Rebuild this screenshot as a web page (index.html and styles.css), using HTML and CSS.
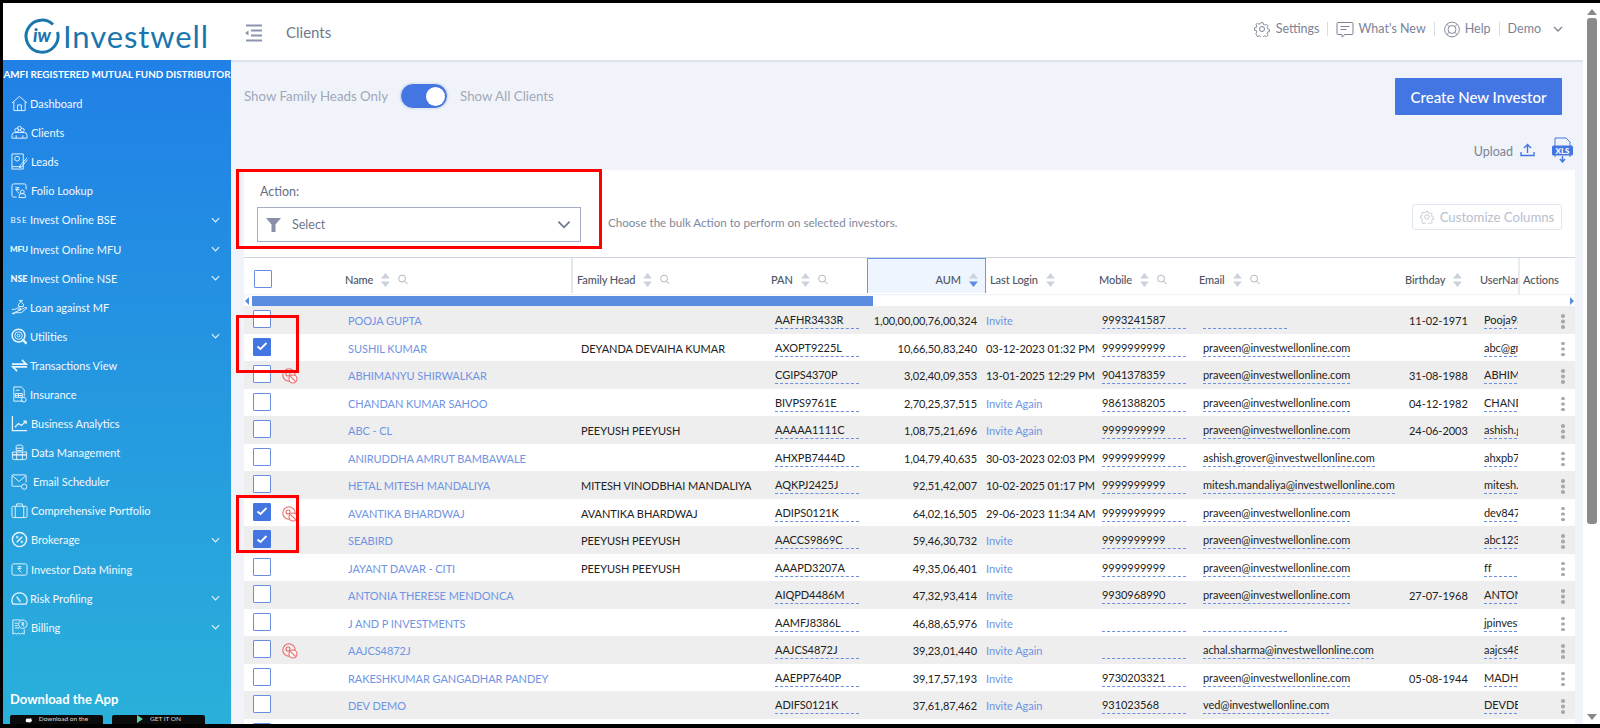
FILE: index.html
```html
<!DOCTYPE html>
<html lang="en">
<head>
<meta charset="utf-8">
<title>Investwell - Clients</title>
<link rel="stylesheet" href="styles.css">
</head>
<body>
<svg class="defs" aria-hidden="true">
  <symbol id="sort" viewBox="0 0 9 14"><path d="M4.5 0 9 5.5H0z" fill="#ccd2dd"/><path d="M4.5 14 0 8.500H9z" fill="#ccd2dd"/></symbol>
  <symbol id="sortd" viewBox="0 0 9 14"><path d="M4.5 0 9 5.5H0z" fill="#ccd2dd"/><path d="M4.500 14 0 8.500H9z" fill="#5e8be3"/></symbol>
  <symbol id="find" viewBox="0 0 11 11"><circle cx="4.500" cy="4.500" r="3.800" fill="none" stroke="#a9b0bd" stroke-width="1"/><path d="M7.300 7.300 10.500 10.500" stroke="#a9b0bd" stroke-width="1.100"/></symbol>
  <symbol id="tick" viewBox="0 0 18 18"><path d="M4.500 9.500 7.500 12 13.500 6" fill="none" stroke="#fff" stroke-width="1.800"/></symbol>
  <symbol id="noinv" viewBox="0 0 16 16"><circle cx="7" cy="7" r="6.200" fill="none" stroke="#ea6a6c" stroke-width="1.100"/><circle cx="6" cy="6" r="2" fill="none" stroke="#ea6a6c" stroke-width="1.100"/><circle cx="11" cy="11" r="4" fill="#fff" stroke="#ea6a6c" stroke-width="1.100"/><path d="M8.300 8.300 13.700 13.700" stroke="#ea6a6c" stroke-width="1.200"/></symbol>
  <symbol id="chev" viewBox="0 0 10 6"><path d="M1 1 5 5 9 1" fill="none" stroke="currentColor" stroke-width="1.300"/></symbol>
  <symbol id="gear" viewBox="0 0 16 16"><circle cx="8" cy="8" r="2.500" fill="none" stroke="currentColor"/><path d="M6.700 1h2.600l.4 2 1.600.7 1.800-1 1.700 1.900-1.100 1.700.6 1.600 2 .4v2.600l-2 .4-.6 1.600 1.100 1.700-1.700 1.900-1.800-1-1.600.7-.4 2H6.700l-.4-2-1.600-.7-1.800 1L1.200 13l1.100-1.700-.6-1.600-2-.4V6.700l2-.4.6-1.600L1.200 3 2.900 1.700l1.800 1 1.600-.7z" transform="translate(.8 .8) scale(.9)" fill="none" stroke="currentColor"/></symbol>
</svg>
<div class="shell">
  <div class="app">
    <header class="topbar">
      <div class="brand">
        <svg class="brand-mark" viewBox="0 0 36 36"><path d="M29 6.500A16 16 0 1 0 33.500 14" fill="none" stroke="#1a76ac" stroke-width="3"/><text x="18" y="24" text-anchor="middle" class="brand-iw">iw</text></svg>
        <span class="brand-name">Investwell</span>
      </div>
      <svg class="menu-ic" viewBox="0 0 18 18"><path d="M2 1.500H18M7 6.500H18M7 11.500H18M2 16.500H18" stroke="#8b94ad" stroke-width="2.200"/><path d="M4.500 6.500 1 9 4.500 11.500z" fill="#8b94ad"/></svg>
      <span class="page-title">Clients</span>
      <nav class="top-nav">
        <svg class="nav-ic"><use href="#gear"/></svg><span class="nav-txt">Settings</span><i class="nav-sep"></i>
        <svg class="nav-ic nav-ic-w" viewBox="0 0 18 16"><path d="M2 1h14a1 1 0 0 1 1 1v10a1 1 0 0 1-1 1H9l-3 2.500V13H2a1 1 0 0 1-1-1V2a1 1 0 0 1 1-1z" fill="none" stroke="currentColor"/><path d="M4.500 5h9M4.500 8h6" stroke="currentColor"/></svg><span class="nav-txt">What's New</span><i class="nav-sep"></i>
        <svg class="nav-ic nav-ic-w" viewBox="0 0 18 18"><circle cx="9" cy="9" r="7.800" fill="none" stroke="currentColor"/><circle cx="9" cy="9" r="4.200" fill="none" stroke="currentColor"/><path d="M3.500 3.500 6 6M14.500 3.500 12 6M3.500 14.500 6 12M14.500 14.500 12 12" stroke="currentColor"/></svg><span class="nav-txt">Help</span><i class="nav-sep"></i>
        <span class="nav-txt">Demo</span>
        <svg class="nav-chev"><use href="#chev"/></svg>
      </nav>
    </header>
    <div class="body-wrap">
      <aside class="sidebar">
        <div class="amfi">AMFI REGISTERED MUTUAL FUND DISTRIBUTOR</div>
        <ul class="side-list">
          <li class="side-item"><span class="slot"><svg viewBox="0 0 18 18"><path d="M1 8.500 9 1.500 17 8.500M3 7v9.500h12V7M7 16.500V10.500h4v6" /></svg></span><span class="lbl">Dashboard</span></li>
          <li class="side-item"><span class="slot"><svg viewBox="0 0 18 18"><circle cx="6" cy="6.500" r="2"/><circle cx="12" cy="6.500" r="2"/><circle cx="9" cy="4.500" r="2"/><path d="M1 15v-3a3 3 0 0 1 3-3h10a3 3 0 0 1 3 3v3zM5.500 15v-3M12.500 15v-3"/></svg></span><span class="lbl lbl1">Clients</span></li>
          <li class="side-item"><span class="slot"><svg viewBox="0 0 18 18"><path d="M1 1h12v16H1zM1 14.500h10"/><circle cx="6.500" cy="6" r="2.500"/><path d="M17 5 10 13l-1 2.500 2.500-1L17.500 7"/></svg></span><span class="lbl lbl1">Leads</span></li>
          <li class="side-item"><span class="slot"><svg viewBox="0 0 18 18"><path d="M6 16H3a2 2 0 0 1-2-2V4a2 2 0 0 1 2-2h11a2 2 0 0 1 2 2v4M4.500 6H9M4.500 8H9M6 6q2 1 0 3.500L9 12.500"/><circle cx="12" cy="10.500" r="2"/><path d="M8.500 16.500v-1a3 3 0 0 1 7 0v1z"/></svg></span><span class="lbl lbl1">Folio Lookup</span></li>
          <li class="side-item"><span class="slot slot-t slot-thin">BSE</span><span class="lbl">Invest Online BSE</span><svg class="side-chev"><use href="#chev"/></svg></li>
          <li class="side-item"><span class="slot slot-t">MFU</span><span class="lbl">Invest Online MFU</span><svg class="side-chev"><use href="#chev"/></svg></li>
          <li class="side-item"><span class="slot slot-t slot-big">NSE</span><span class="lbl">Invest Online NSE</span><svg class="side-chev"><use href="#chev"/></svg></li>
          <li class="side-item"><span class="slot"><svg viewBox="0 0 18 18"><path d="M1 11h3l3-1.500h3v2H7M10 11.500l5-2.500 2 .5-6 5H5l-1 1H1z"/><path d="M9 1.500h3L11 3.500q3.500 2 2 4.500H8q-1.500-2.500 2-4.500z"/></svg></span><span class="lbl">Loan against MF</span></li>
          <li class="side-item"><span class="slot"><svg viewBox="0 0 18 18"><circle cx="8" cy="8" r="6.800" stroke-width="1.600"/><circle cx="8" cy="8" r="4"/><circle cx="8" cy="8" r="1.500"/><path d="M12 12 16.500 16.500" stroke-width="2.400"/></svg></span><span class="lbl">Utilities</span><svg class="side-chev"><use href="#chev"/></svg></li>
          <li class="side-item"><span class="slot"><svg viewBox="0 0 18 18"><path d="M1 7.500H16L11.500 3M17 10.500H2L6.500 15" stroke-width="1.700"/></svg></span><span class="lbl">Transactions View</span></li>
          <li class="side-item"><span class="slot"><svg viewBox="0 0 18 18"><path d="M13 16H3V1h8l3 3v7M5 4.500h4M4.500 8H12v4H4.500zM8 8v4M4.500 10h7.500"/><circle cx="13.500" cy="14.500" r="2.500"/></svg></span><span class="lbl">Insurance</span></li>
          <li class="side-item"><span class="slot"><svg viewBox="0 0 18 18"><path d="M1.500 1v15.500H17" stroke-width="1.300"/><path d="M4 13l4-4 3 2 5-4.500M13 6.500h3v3" stroke-width="1.300"/></svg></span><span class="lbl lbl1">Business Analytics</span></li>
          <li class="side-item"><span class="slot"><svg viewBox="0 0 18 18"><path d="M5.500 2.500a3.500 1.500 0 0 1 7 0v4.500h-7zM5.500 4.500h7"/><path d="M1.500 8.500h15v3h-15zM1.500 11.500h15v3a2 2 0 0 1-2 2h-11a2 2 0 0 1-2-2zM6 8.500v8M12 8.500v8"/></svg></span><span class="lbl lbl1">Data Management</span></li>
          <li class="side-item"><span class="slot"><svg viewBox="0 0 18 18"><path d="M11 14H2a1 1 0 0 1-1-1V3a1 1 0 0 1 1-1h13a1 1 0 0 1 1 1v7M1.500 3 8.500 9 15.500 3"/><circle cx="14" cy="14.500" r="2.800"/></svg></span><span class="lbl lbl3">Email Scheduler</span></li>
          <li class="side-item"><span class="slot"><svg viewBox="0 0 18 18"><path d="M2.500 4.500h13a1.500 1.500 0 0 1 1.500 1.500v9a1.500 1.500 0 0 1-1.500 1.500h-13A1.500 1.500 0 0 1 1 15V6a1.500 1.500 0 0 1 1.500-1.500zM6 4.500V2h6v2.500M4.500 4.500v12M13.500 4.500v12"/></svg></span><span class="lbl lbl1">Comprehensive Portfolio</span></li>
          <li class="side-item"><span class="slot"><svg viewBox="0 0 18 18"><circle cx="9" cy="9" r="7.500" stroke-width="1.500"/><path d="M6 12 12 6" stroke-width="1.500"/><circle cx="6.500" cy="6.500" r="1"/><circle cx="11.500" cy="11.500" r="1"/></svg></span><span class="lbl lbl1">Brokerage</span><svg class="side-chev"><use href="#chev"/></svg></li>
          <li class="side-item"><span class="slot"><svg viewBox="0 0 18 18"><rect x="1" y="3" width="16" height="12" rx="2"/><path d="M7 6h4M7 8h4M8 6q2.500 1 0 3l3 3"/></svg></span><span class="lbl lbl1">Investor Data Mining</span></li>
          <li class="side-item"><span class="slot"><svg viewBox="0 0 18 18"><path d="M2 15a8 8 0 1 1 14 0z" stroke-width="1.300"/><path d="M6 7l4 5.500" stroke-width="1.500"/></svg></span><span class="lbl">Risk Profiling</span><svg class="side-chev"><use href="#chev"/></svg></li>
          <li class="side-item"><span class="slot"><svg viewBox="0 0 18 18"><path d="M2 1h8M2 1v15l2-1 2 1 2-1 2 1 2-1 2 1v-5M4 4.500h3M4 7h3M4 9.500h5"/><circle cx="12.500" cy="5.500" r="4.500"/><path d="M11 4h3M11 5.500h3M12 4q2 1 0 2.500l2 1.500"/></svg></span><span class="lbl lbl1">Billing</span><svg class="side-chev"><use href="#chev"/></svg></li>
        </ul>
        <div class="dl-title">Download the App</div>
        <div class="badges">
          <span class="badge"><svg class="badge-ic" viewBox="0 0 8 8"><path d="M1 7q-1-4 2-3.500 2 .5 3-.5l1 3-2 1.500z" fill="#fff"/></svg>Download on the</span>
          <span class="badge"><svg class="badge-ic" viewBox="0 0 8 8"><path d="M1 0 7 4 1 8z" fill="#5fd0a0"/></svg>GET IT ON</span>
        </div>
      </aside>
      <main class="main">
        <div class="toolbar">
          <div class="switch-row">
            <span>Show Family Heads Only</span>
            <span class="switch"><i class="knob"></i></span>
            <span>Show All Clients</span>
          </div>
          <button class="create" type="button">Create New Investor</button>
        </div>
        <div class="upload-row">
          <span class="upload">Upload</span>
          <svg class="up-ic" viewBox="0 0 15 14"><path d="M7.500 10V1.500M4 5l3.500-3.500L11 5" fill="none" stroke="#4476e3" stroke-width="1.400"/><path d="M1 9v3.500h13V9" fill="none" stroke="#4476e3" stroke-width="1.400"/></svg>
          <svg class="xls-ic" viewBox="0 0 21 26"><path d="M3 9V1h11l4 4v4M3 18v2M18 18v2" fill="none" stroke="#4476e3"/><rect x="0" y="8.500" width="21" height="10" rx="1.500" fill="#4476e3"/><text x="10.500" y="16.800" text-anchor="middle" class="xls-t">XLS</text><path d="M10.500 19v5M8 22l2.500 3 2.500-3" fill="none" stroke="#4476e3" stroke-width="1.400"/></svg>
        </div>
        <section class="panel">
          <div class="action-bar">
            <div class="action-col">
              <label class="action-lbl">Action:</label>
              <div class="select">
                <svg class="funnel" viewBox="0 0 15 14"><path d="M0 0H15L9.500 6.500V14H5.500V6.500z" fill="#8790a6"/></svg>
                <span class="sel-txt">Select</span>
                <svg class="sel-chev"><use href="#chev"/></svg>
              </div>
            </div>
            <span class="bulk-note">Choose the bulk Action to perform on selected investors.</span>
            <button class="customize" type="button"><svg class="cust-ic"><use href="#gear"/></svg>Customize Columns</button>
          </div>
          <div class="grid-wrap">
            <div class="row head">
              <div class="hc hc-sel"><span class="cb"></span></div>
              <div class="hc hc-name">Name<svg class="s"><use href="#sort"/></svg><svg class="f"><use href="#find"/></svg></div>
              <div class="hc">Family Head<svg class="s"><use href="#sort"/></svg><svg class="f"><use href="#find"/></svg></div>
              <div class="hc">PAN<svg class="s"><use href="#sort"/></svg><svg class="f"><use href="#find"/></svg></div>
              <div class="hc hc-aum">AUM<svg class="s"><use href="#sortd"/></svg></div>
              <div class="hc">Last Login<svg class="s"><use href="#sort"/></svg></div>
              <div class="hc">Mobile<svg class="s"><use href="#sort"/></svg><svg class="f"><use href="#find"/></svg></div>
              <div class="hc hc-mail">Email<svg class="s"><use href="#sort"/></svg><svg class="f"><use href="#find"/></svg></div>
              <div class="hc">Birthday<svg class="s"><use href="#sort"/></svg></div>
              <div class="hc">UserName</div>
              <div class="hc hc-act">Actions</div>
            </div>
            <div class="hscroll"><i class="hs-l"></i><i class="hs-bar"></i><i class="hs-r"></i></div>
            <div class="rows">
              <div class="row"><div class="c-sel"><span class="cb"></span></div><a class="c-name">POOJA GUPTA</a><div class="c-fam"></div><div class="c-pan"><span class="u">AAFHR3433R</span></div><div class="c-aum">1,00,00,00,76,00,324</div><a class="c-log">Invite</a><div class="c-mob"><span class="u">9993241587</span></div><div class="c-mail"><span class="u um"></span></div><div class="c-dob">11-02-1971</div><div class="c-usr"><span class="u">Pooja93</span></div><div class="c-act"><i class="dots"></i></div></div>
              <div class="row"><div class="c-sel"><span class="cb on"><svg><use href="#tick"/></svg></span></div><a class="c-name">SUSHIL KUMAR</a><div class="c-fam">DEYANDA DEVAIHA KUMAR</div><div class="c-pan"><span class="u">AXOPT9225L</span></div><div class="c-aum">10,66,50,83,240</div><div class="c-log">03-12-2023 01:32 PM</div><div class="c-mob"><span class="u">9999999999</span></div><div class="c-mail"><span class="u um">praveen@investwellonline.com</span></div><div class="c-dob"></div><div class="c-usr"><span class="u">abc@gmail</span></div><div class="c-act"><i class="dots"></i></div></div>
              <div class="row"><div class="c-sel"><span class="cb"></span><svg class="ni"><use href="#noinv"/></svg></div><a class="c-name">ABHIMANYU SHIRWALKAR</a><div class="c-fam"></div><div class="c-pan"><span class="u">CGIPS4370P</span></div><div class="c-aum">3,02,40,09,353</div><div class="c-log">13-01-2025 12:29 PM</div><div class="c-mob"><span class="u">9041378359</span></div><div class="c-mail"><span class="u um">praveen@investwellonline.com</span></div><div class="c-dob">31-08-1988</div><div class="c-usr"><span class="u">ABHIMANYU</span></div><div class="c-act"><i class="dots"></i></div></div>
              <div class="row"><div class="c-sel"><span class="cb"></span></div><a class="c-name">CHANDAN KUMAR SAHOO</a><div class="c-fam"></div><div class="c-pan"><span class="u">BIVPS9761E</span></div><div class="c-aum">2,70,25,37,515</div><a class="c-log">Invite Again</a><div class="c-mob"><span class="u">9861388205</span></div><div class="c-mail"><span class="u um">praveen@investwellonline.com</span></div><div class="c-dob">04-12-1982</div><div class="c-usr"><span class="u">CHANDAN</span></div><div class="c-act"><i class="dots"></i></div></div>
              <div class="row"><div class="c-sel"><span class="cb"></span></div><a class="c-name">ABC - CL</a><div class="c-fam">PEEYUSH PEEYUSH</div><div class="c-pan"><span class="u">AAAAA1111C</span></div><div class="c-aum">1,08,75,21,696</div><a class="c-log">Invite Again</a><div class="c-mob"><span class="u">9999999999</span></div><div class="c-mail"><span class="u um">praveen@investwellonline.com</span></div><div class="c-dob">24-06-2003</div><div class="c-usr"><span class="u">ashish.grover</span></div><div class="c-act"><i class="dots"></i></div></div>
              <div class="row"><div class="c-sel"><span class="cb"></span></div><a class="c-name">ANIRUDDHA AMRUT BAMBAWALE</a><div class="c-fam"></div><div class="c-pan"><span class="u">AHXPB7444D</span></div><div class="c-aum">1,04,79,40,635</div><div class="c-log">30-03-2023 02:03 PM</div><div class="c-mob"><span class="u">9999999999</span></div><div class="c-mail"><span class="u um">ashish.grover@investwellonline.com</span></div><div class="c-dob"></div><div class="c-usr"><span class="u">ahxpb7444d</span></div><div class="c-act"><i class="dots"></i></div></div>
              <div class="row"><div class="c-sel"><span class="cb"></span></div><a class="c-name">HETAL MITESH MANDALIYA</a><div class="c-fam">MITESH VINODBHAI MANDALIYA</div><div class="c-pan"><span class="u">AQKPJ2425J</span></div><div class="c-aum">92,51,42,007</div><div class="c-log">10-02-2025 01:17 PM</div><div class="c-mob"><span class="u">9999999999</span></div><div class="c-mail"><span class="u um">mitesh.mandaliya@investwellonline.com</span></div><div class="c-dob"></div><div class="c-usr"><span class="u">mitesh.mandaliya</span></div><div class="c-act"><i class="dots"></i></div></div>
              <div class="row"><div class="c-sel"><span class="cb on"><svg><use href="#tick"/></svg></span><svg class="ni"><use href="#noinv"/></svg></div><a class="c-name">AVANTIKA BHARDWAJ</a><div class="c-fam">AVANTIKA BHARDWAJ</div><div class="c-pan"><span class="u">ADIPS0121K</span></div><div class="c-aum">64,02,16,505</div><div class="c-log">29-06-2023 11:34 AM</div><div class="c-mob"><span class="u">9999999999</span></div><div class="c-mail"><span class="u um">praveen@investwellonline.com</span></div><div class="c-dob"></div><div class="c-usr"><span class="u">dev8471</span></div><div class="c-act"><i class="dots"></i></div></div>
              <div class="row"><div class="c-sel"><span class="cb on"><svg><use href="#tick"/></svg></span></div><a class="c-name">SEABIRD</a><div class="c-fam">PEEYUSH PEEYUSH</div><div class="c-pan"><span class="u">AACCS9869C</span></div><div class="c-aum">59,46,30,732</div><a class="c-log">Invite</a><div class="c-mob"><span class="u">9999999999</span></div><div class="c-mail"><span class="u um">praveen@investwellonline.com</span></div><div class="c-dob"></div><div class="c-usr"><span class="u">abc1234</span></div><div class="c-act"><i class="dots"></i></div></div>
              <div class="row"><div class="c-sel"><span class="cb"></span></div><a class="c-name">JAYANT DAVAR - CITI</a><div class="c-fam">PEEYUSH PEEYUSH</div><div class="c-pan"><span class="u">AAAPD3207A</span></div><div class="c-aum">49,35,06,401</div><a class="c-log">Invite</a><div class="c-mob"><span class="u">9999999999</span></div><div class="c-mail"><span class="u um">praveen@investwellonline.com</span></div><div class="c-dob"></div><div class="c-usr"><span class="u">ff</span></div><div class="c-act"><i class="dots"></i></div></div>
              <div class="row"><div class="c-sel"><span class="cb"></span></div><a class="c-name">ANTONIA THERESE MENDONCA</a><div class="c-fam"></div><div class="c-pan"><span class="u">AIQPD4486M</span></div><div class="c-aum">47,32,93,414</div><a class="c-log">Invite</a><div class="c-mob"><span class="u">9930968990</span></div><div class="c-mail"><span class="u um">praveen@investwellonline.com</span></div><div class="c-dob">27-07-1968</div><div class="c-usr"><span class="u">ANTONIA</span></div><div class="c-act"><i class="dots"></i></div></div>
              <div class="row"><div class="c-sel"><span class="cb"></span></div><a class="c-name">J AND P INVESTMENTS</a><div class="c-fam"></div><div class="c-pan"><span class="u">AAMFJ8386L</span></div><div class="c-aum">46,88,65,976</div><a class="c-log">Invite</a><div class="c-mob"><span class="u"></span></div><div class="c-mail"><span class="u um"></span></div><div class="c-dob"></div><div class="c-usr"><span class="u">jpinvest</span></div><div class="c-act"><i class="dots"></i></div></div>
              <div class="row"><div class="c-sel"><span class="cb"></span><svg class="ni"><use href="#noinv"/></svg></div><a class="c-name">AAJCS4872J</a><div class="c-fam"></div><div class="c-pan"><span class="u">AAJCS4872J</span></div><div class="c-aum">39,23,01,440</div><a class="c-log">Invite Again</a><div class="c-mob"><span class="u"></span></div><div class="c-mail"><span class="u um">achal.sharma@investwellonline.com</span></div><div class="c-dob"></div><div class="c-usr"><span class="u">aajcs4872j</span></div><div class="c-act"><i class="dots"></i></div></div>
              <div class="row"><div class="c-sel"><span class="cb"></span></div><a class="c-name">RAKESHKUMAR GANGADHAR PANDEY</a><div class="c-fam"></div><div class="c-pan"><span class="u">AAEPP7640P</span></div><div class="c-aum">39,17,57,193</div><a class="c-log">Invite</a><div class="c-mob"><span class="u">9730203321</span></div><div class="c-mail"><span class="u um">praveen@investwellonline.com</span></div><div class="c-dob">05-08-1944</div><div class="c-usr"><span class="u">MADHU</span></div><div class="c-act"><i class="dots"></i></div></div>
              <div class="row"><div class="c-sel"><span class="cb"></span></div><a class="c-name">DEV DEMO</a><div class="c-fam"></div><div class="c-pan"><span class="u">ADIFS0121K</span></div><div class="c-aum">37,61,87,462</div><a class="c-log">Invite Again</a><div class="c-mob"><span class="u">931023568</span></div><div class="c-mail"><span class="u um">ved@investwellonline.com</span></div><div class="c-dob"></div><div class="c-usr"><span class="u">DEVDEMO</span></div><div class="c-act"><i class="dots"></i></div></div>
              <div class="row"><div class="c-sel"><span class="cb"></span></div></div>
            </div>
          </div>
        </section>
      </main>
    </div>
  </div>
  <div class="page-scroll"><i class="ps-up"></i><i class="ps-thumb"></i><i class="ps-down"></i></div>
  <i class="callout callout-a"></i>
  <i class="callout callout-b"></i>
  <i class="callout callout-c"></i>
</div>
</body>
</html>
```

FILE: styles.css
```css
* { box-sizing: border-box; }
html, body { margin: 0; height: 728px; overflow: hidden; }
body { background: #000; padding: 3px 0 4px 3px; font-family: Lato, "Open Sans", sans-serif; color: #222; }
.defs { width: 0; height: 0; position: absolute; }
i { display: block; font-style: normal; }

.shell { display: flex; height: 721px; width: 1597px; }
.app { width: 1580px; display: flex; flex-direction: column; }

/* top bar */
.topbar { height: 57px; background: #fff; display: flex; align-items: center; flex: none; }
.brand { width: 241px; display: flex; align-items: center; padding: 8px 0 0 21px; flex: none; }
.brand-mark { width: 36px; height: 36px; flex: none; }
.brand-iw { font: italic 900 18px Lato, sans-serif; fill: #1a76ac; }
.brand-name { font: 400 31px/36px Lato, sans-serif; color: #1a76ac; margin-left: 3px; letter-spacing: .9px; }
.menu-ic { width: 18px; height: 18px; flex: none; margin-top: 2px; }
.page-title { font-size: 15px; color: #6f788d; margin-left: 24px; }
.top-nav { margin-left: auto; display: flex; align-items: center; color: #7b8396; padding: 0 20px 5px 0; font-size: 12.500px; height: 25px; }
.nav-ic { width: 16px; height: 16px; margin-right: 6px; flex: none; }
.nav-ic-w { width: 18px; height: 17px; margin-right: 4px; }
.nav-txt { line-height: 20px; white-space: nowrap; }
.nav-sep { width: 1px; height: 14px; background: #d8dce5; margin: 0 8px; }
.nav-chev { width: 10px; height: 6px; margin-left: 12px; }

/* layout */
.body-wrap { flex: 1; display: flex; min-height: 0; }
.sidebar { width: 228px; flex: none; background: linear-gradient(180deg, #2080e6 0%, #2ab0da 100%); color: #f2f9ff; overflow: hidden; display: flex; flex-direction: column; }
.amfi { font-size: 9.900px; font-weight: 700; white-space: nowrap; text-align: center; height: 30px; line-height: 29px; color: #fff; }
.side-list { list-style: none; margin: 0; padding: 0; }
.side-item { height: 29.100px; display: flex; align-items: center; font-size: 11px; padding-left: 5px; }
.slot { width: 22px; height: 18px; display: flex; align-items: center; justify-content: center; flex: none; }
.slot svg { width: 17px; height: 17px; fill: none; stroke: #e9f5ff; stroke-width: 1; }
.slot-t { font-size: 8px; font-weight: 900; color: #f2f9ff; }
.slot-thin { font-weight: 400; letter-spacing: 1px; }
.slot-big { font-size: 9px; }
.lbl { white-space: nowrap; }
.lbl1 { margin-left: 1px; }
.lbl3 { margin-left: 3px; }
.side-chev { width: 9px; height: 6px; margin-left: auto; margin-right: 11px; color: #dff3ff; flex: none; }
.dl-title { font-size: 13px; font-weight: 700; color: #fff; padding-left: 7px; margin-top: 49px; line-height: 16px; }
.badges { display: flex; gap: 9px; padding-left: 7px; margin-top: 8px; }
.badge { width: 93px; height: 20px; background: #0b0b0b; color: #ddd; font-size: 6.500px; line-height: 8px; display: flex; justify-content: center; gap: 6px; border-radius: 2px; }
.badge-ic { width: 8px; height: 8px; }

/* main */
.main { flex: 1; min-width: 0; background: #f0f3f9; border-top: 2px solid #dde3ee; padding: 16px 8px 0 13px; display: flex; flex-direction: column; }
.toolbar { display: flex; justify-content: space-between; align-items: center; height: 37px; padding-right: 13px; flex: none; }
.switch-row { display: flex; align-items: center; color: #a0a8b9; font-size: 13.300px; gap: 12px; margin-bottom: 1px; }
.switch { width: 48px; height: 26px; border-radius: 13px; background: #4476e3; border: 1px solid #e3e7f0; padding: 3px 3px 0 25px; box-shadow: 0 0 2px #cdd4e2; }
.knob { width: 19px; height: 19px; border-radius: 50%; background: #fff; }
.create { width: 167px; height: 37px; border: 0; background: #4476e3; color: #fff; font: 500 15px Lato, sans-serif; border-radius: 1px; padding: 0; }
.upload-row { height: 25px; margin-top: 22px; display: flex; align-items: center; justify-content: flex-end; padding-right: 2px; flex: none; color: #7b8396; font-size: 12.500px; }
.upload { padding-top: 3px; }
.up-ic { width: 15px; height: 14px; margin-left: 7px; }
.xls-ic { width: 21px; height: 26px; margin-left: 17px; }
.xls-t { font: 900 8px Lato, sans-serif; fill: #fff; }

.panel { flex: 1; min-height: 0; background: #fff; margin-top: 8px; overflow: hidden; display: flex; flex-direction: column; }
.action-bar { height: 87px; flex: none; display: flex; align-items: flex-start; padding: 14px 13px 0 13px; }
.action-col { width: 324px; flex: none; }
.action-lbl { display: block; font-size: 12.500px; line-height: 15px; color: #666e80; padding-left: 3px; }
.select { height: 35px; margin-top: 8px; border: 1px solid #a5adc4; display: flex; align-items: center; padding: 0 9px 0 8px; }
.funnel { width: 15px; height: 14px; flex: none; }
.sel-txt { font-size: 12.500px; color: #6f788d; margin-left: 11px; }
.sel-chev { width: 14px; height: 9px; margin-left: auto; color: #6f788d; }
.bulk-note { font-size: 11.600px; color: #80889a; margin: 31px 0 0 27px; white-space: nowrap; line-height: 15px; }
.customize { margin: 20px 0 0 auto; width: 150px; height: 26px; background: #fff; border: 1px solid #e1e5f1; border-radius: 3px; color: #b9c0cf; font: 13.200px Lato, sans-serif; display: flex; align-items: center; justify-content: center; gap: 6px; padding: 0; }
.cust-ic { width: 14px; height: 14px; }

/* data grid */
.grid-wrap { flex: 1; min-height: 0; overflow: hidden; border-top: 1px solid #cfd6df; }
.row { display: grid; grid-template-columns: 96px 233px 194px 100px 119px 109px 103px 203px 75px 42px 57px; height: 27.500px; font-size: 11px; letter-spacing: -.05px; line-height: 29px; white-space: nowrap; }
.rows .row:nth-child(odd) { background: #eee; }
.row.head { height: 36px; background: #fff; line-height: 16px; color: #4e5564; font-weight: 500; letter-spacing: -.1px; }
.hc { display: flex; align-items: center; padding: 15px 0 7px 4px; overflow: hidden; height: 35px; }
.hc-sel { padding-left: 10px; padding-top: 13px; }
.hc-name { padding-left: 5px; border-right: 2px solid #e3e6ea; }
.hc-aum { background: #eff5fe; border: 1px solid #6a97e6; border-bottom: 0; justify-content: flex-end; padding-right: 7px; }
.hc-mail { padding-left: 1px; }
.hc-act { border-left: 2px solid #e8ebf0; height: 36px; padding-left: 3px; }
.s { width: 9px; height: 14px; margin-left: 8px; flex: none; }
.f { width: 10px; height: 11px; margin-left: 8px; flex: none; }
.hscroll { height: 12px; background: #fff; display: flex; align-items: center; box-shadow: inset 0 1px 2px #eceff3; padding: 1px 0 0 1px; }
.hs-l { width: 0; height: 0; border: 4px solid transparent; border-left: 0; border-right: 4px solid #5b8ce0; }
.hs-bar { width: 621px; height: 10px; background: #5b8ce0; margin-left: 3px; }
.hs-r { width: 0; height: 0; border: 4px solid transparent; border-right: 0; border-left: 4px solid #5b8ce0; margin-left: auto; margin-right: 1px; }

.cb { width: 18px; height: 18px; border: 1.500px solid #6a8fe0; background: #fff; border-radius: 1px; flex: none; display: block; }
.cb.on { background: #4476e3; border-color: #4476e3; }
.cb.on svg { width: 18px; height: 18px; margin: -1.500px; display: block; }
.c-sel { display: flex; align-items: flex-start; padding: 4px 0 0 9px; }
.ni { width: 16px; height: 16px; margin-left: 11px; margin-top: 3px; flex: none; }
.c-name { color: #6f94e3; padding-left: 8px; }
.c-fam { padding-left: 8px; color: #222; }
.c-pan, .c-dob, .c-usr { padding-left: 8px; }
.c-aum { text-align: right; padding-right: 9px; }
a.c-log { color: #6f94e3; }
.c-mob { padding-left: 7px; }
.c-mail { padding-left: 5px; }
.c-usr { overflow: hidden; }
.u { display: block; width: 84px; height: 23px; line-height: 28px; border-bottom: 1px dashed #6a8fe0; }
.um { display: inline-block; min-width: 84px; width: auto; vertical-align: top; }
.c-usr .u { width: 33px; }
.c-act { display: flex; justify-content: center; padding: 8px 0 0 33px; }
.dots { width: 3.500px; height: 3.500px; border-radius: 50%; background: #a9a9a9; box-shadow: 0 5.500px 0 #a9a9a9, 0 11px 0 #a9a9a9; }

/* page scrollbar */
.page-scroll { width: 17px; background: #fff; flex: none; display: flex; flex-direction: column; align-items: flex-start; padding: 6px 0 4px 4px; }
.ps-up { width: 0; height: 0; border: 5px solid transparent; border-top: 0; border-bottom: 6px solid #8a8a8a; }
.ps-thumb { width: 10px; height: 506px; background: #8a8a8a; border-radius: 3px; margin-top: 3px; }
.ps-down { width: 0; height: 0; border: 5px solid transparent; border-bottom: 0; border-top: 6px solid #8a8a8a; margin-top: auto; }

/* reviewer annotations drawn over the screen */
.callout { position: absolute; border: 3px solid #f00; pointer-events: none; }
.callout-a { left: 236px; top: 169px; width: 366px; height: 80px; }
.callout-b { left: 236px; top: 315px; width: 63px; height: 58px; }
.callout-c { left: 236px; top: 495px; width: 63px; height: 58px; }
```
